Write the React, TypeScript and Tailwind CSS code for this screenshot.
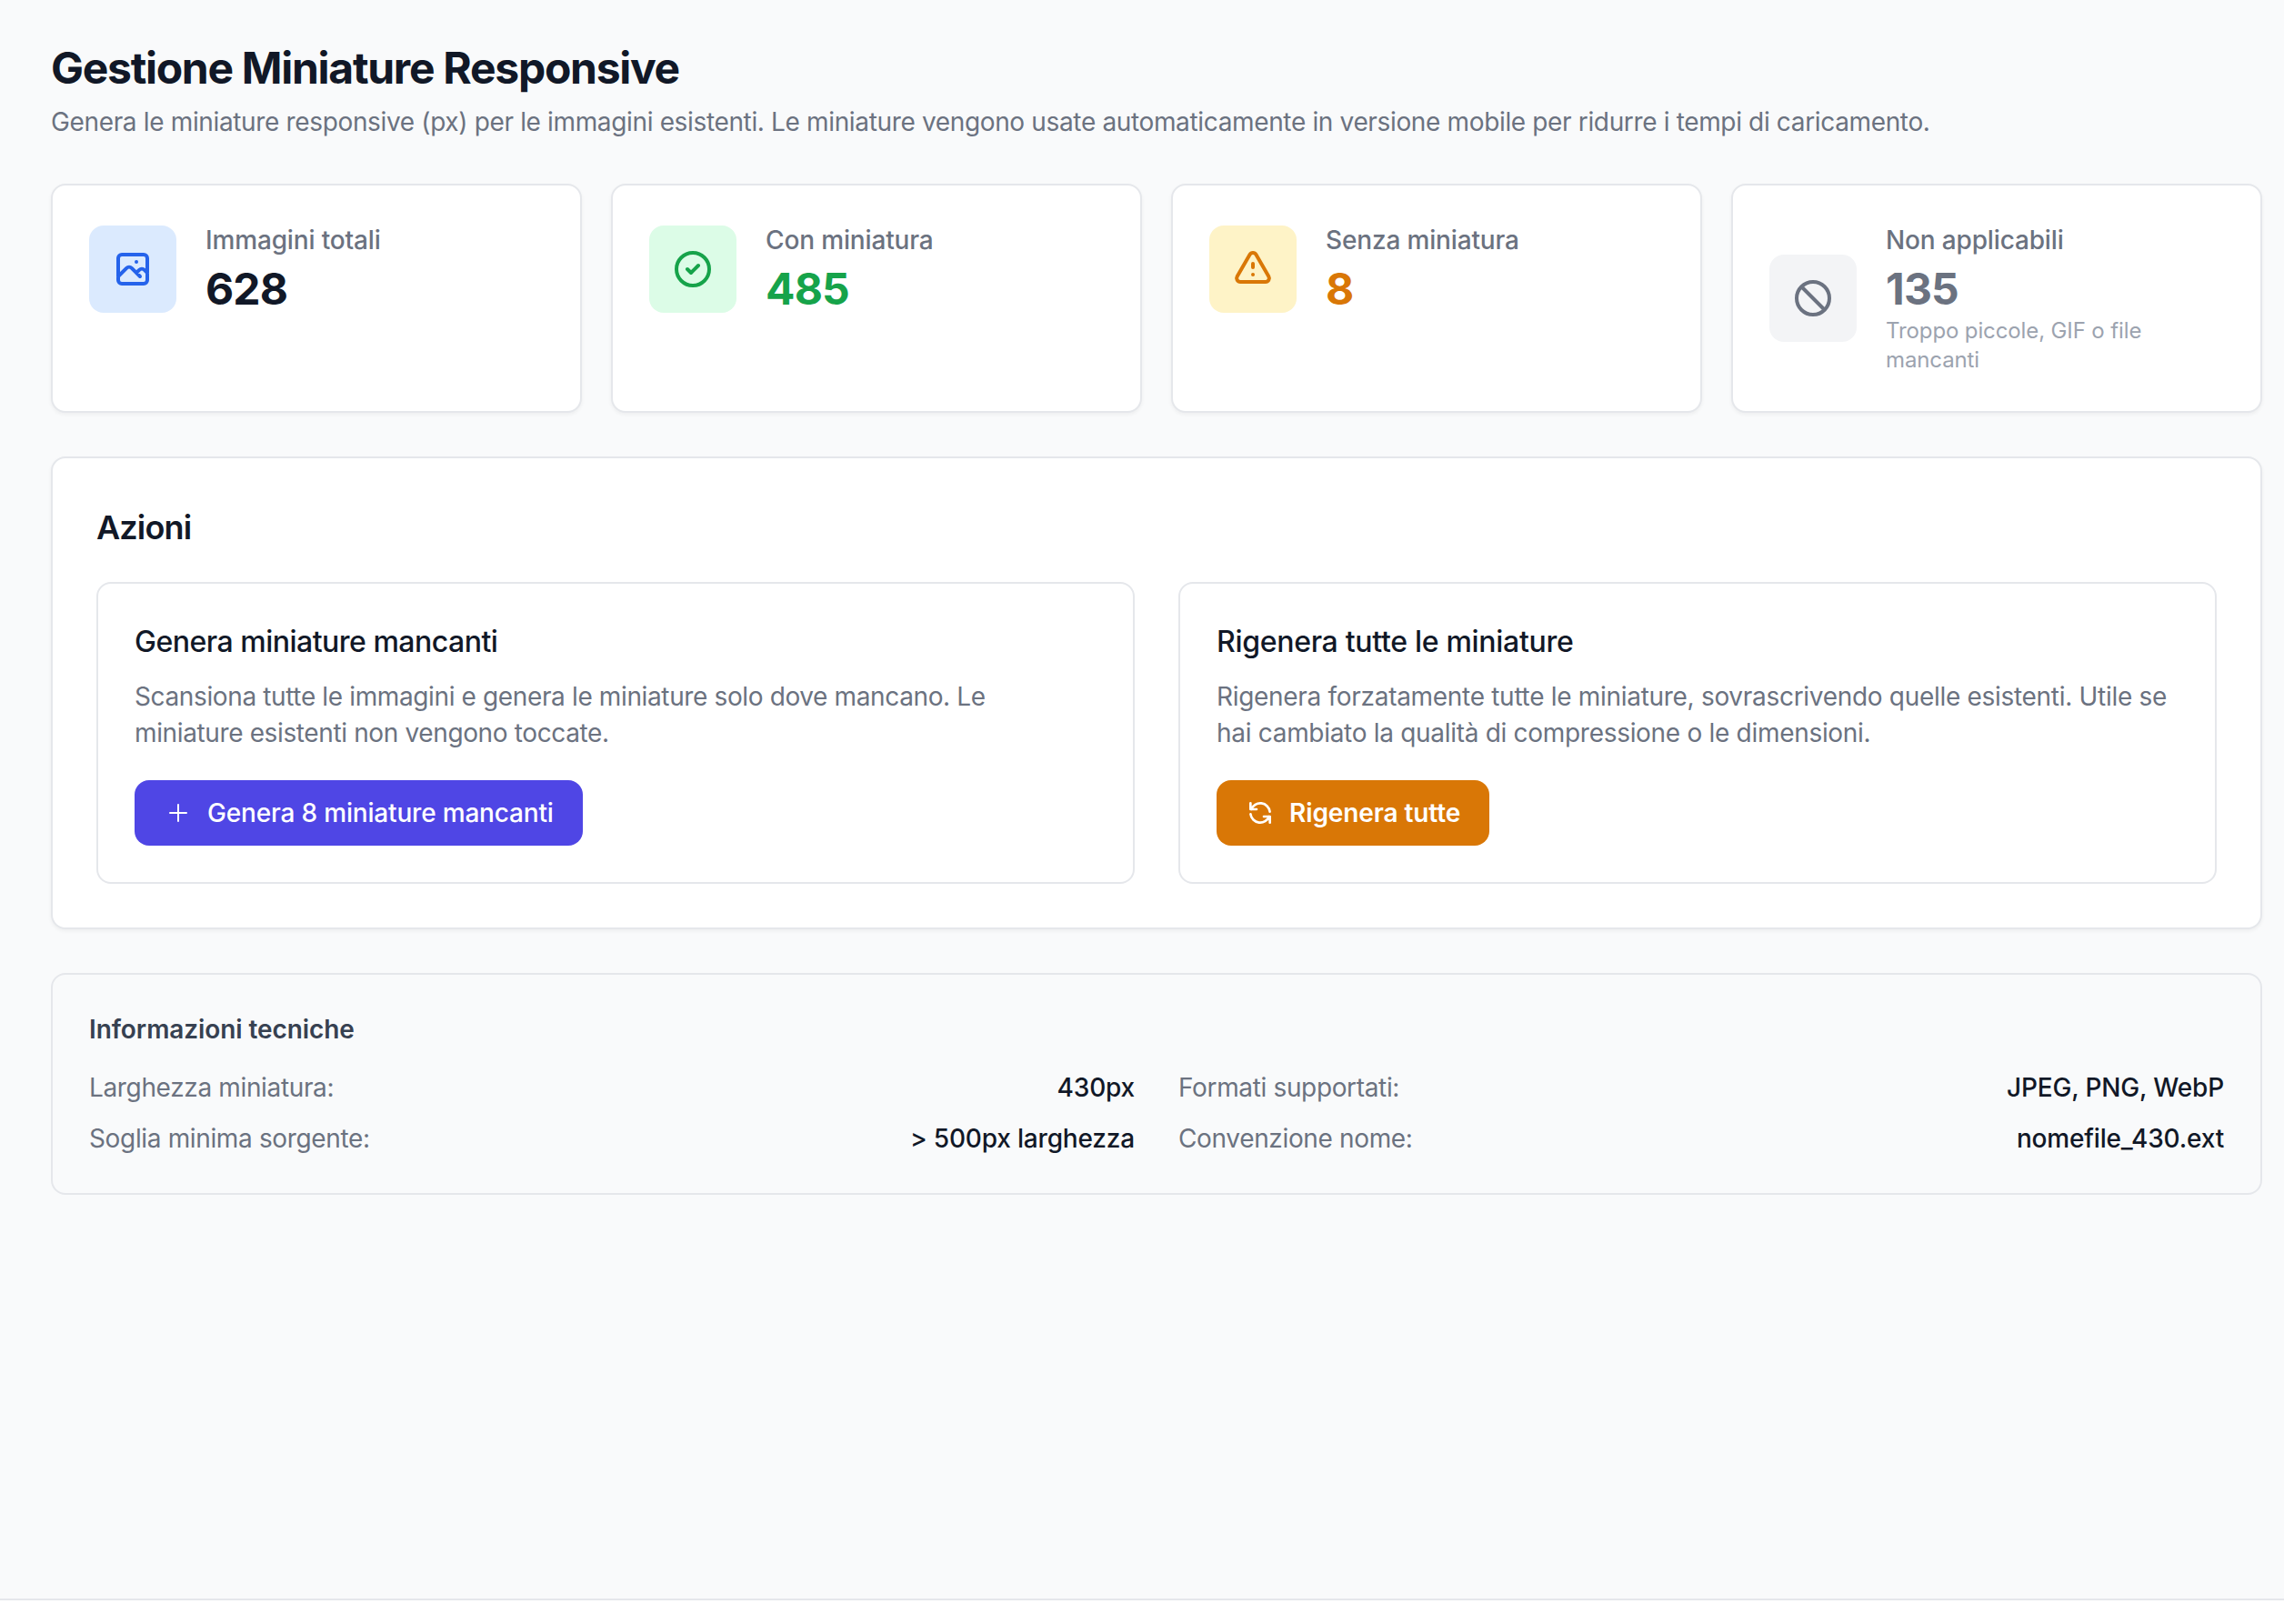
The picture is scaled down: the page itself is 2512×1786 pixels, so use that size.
const sans = "font-['Inter','Noto_Sans',sans-serif]";

type StatProps = {
  label: string;
  value: string;
  box: string;
  ink: string;
  valueInk: string;
  d: string;
  note?: string;
};

function Icon({ d, className, width = 2 }: { d: string; className: string; width?: number }) {
  return (
    <svg className={className} fill="none" viewBox="0 0 24 24" stroke="currentColor" strokeWidth={width} strokeLinecap="round" strokeLinejoin="round">
      <path d={d} />
    </svg>
  );
}

function Stat({ label, value, box, ink, valueInk, d, note }: StatProps) {
  return (
    <div className="bg-white border-2 border-[#e5e7eb] rounded-[16px] shadow-[0_2px_4px_rgba(0,0,0,0.05)] p-10">
      <div className="flex items-center gap-8">
        <div className={`w-24 h-24 shrink-0 rounded-[16px] flex items-center justify-center ${box} ${ink}`}>
          <Icon d={d} className="w-12 h-12" />
        </div>
        <div className="min-w-0">
          <p className="text-[28px] leading-[40px] font-medium tracking-[-0.15px] text-[#6b7280]">{label}</p>
          <p className={`text-[48px] leading-[64px] font-bold tracking-[-0.8px] translate-y-[1.5px] ${valueInk}`}>{value}</p>
          {note && <p className="text-[24px] leading-[32px] tracking-[-0.12px] text-[#9ca3af]">{note}</p>}
        </div>
      </div>
    </div>
  );
}

function Action({ title, titleTrack, text, textTrack, button, d, color, iconWidth }: { title: string; titleTrack: string; text: string; textTrack: string; button: string; d: string; color: string; iconWidth: number }) {
  return (
    <div className="border-2 border-[#e5e7eb] rounded-[16px] p-10">
      <h3 className={`text-[32px] leading-[48px] font-medium text-[#111827] mb-4 ${titleTrack}`}>{title}</h3>
      <p className={`text-[28px] leading-[40px] text-[#6b7280] mb-8 ${textTrack}`}>{text}</p>
      <button className={`inline-flex items-center h-[72px] px-8 rounded-[16px] text-white text-[28px] leading-[40px] ${color}`}>
        <Icon d={d} width={iconWidth} className="w-8 h-8 mr-4" />
        {button}
      </button>
    </div>
  );
}

function Row({ label, value }: { label: string; value: string }) {
  return (
    <div className="flex justify-between text-[28px] leading-[40px]">
      <span className="text-[#6b7280] tracking-[-0.35px]">{label}</span>
      <span className="font-medium text-[#111827] tracking-[-0.18px]">{value}</span>
    </div>
  );
}

export default function App() {
  return (
    <div className={`${sans} bg-white min-h-[1786px]`}>
      <main className="bg-[#f9fafb] border-b-2 border-[#e5e7eb] h-[1760px] pl-14 pr-6 pt-[45px]">
        <h1 className="text-[48px] leading-[60px] font-bold text-[#111827] tracking-[-1.28px]">Gestione Miniature Responsive</h1>
        <p className="text-[28px] leading-[40px] tracking-[-0.35px] text-[#6b7280] mt-[9px] mb-12">
          Genera le miniature responsive (px) per le immagini esistenti. Le miniature vengono usate automaticamente in versione mobile per ridurre i tempi di caricamento.
        </p>

        <div className="grid grid-cols-4 gap-8 mb-12">
          <Stat label="Immagini totali" value="628" box="bg-[#dbeafe]" ink="text-[#2563eb]" valueInk="text-[#111827]"
            d="M4 16l4.586-4.586a2 2 0 012.828 0L16 16m-2-2l1.586-1.586a2 2 0 012.828 0L20 14m-6-6h.01M6 20h12a2 2 0 002-2V6a2 2 0 00-2-2H6a2 2 0 00-2 2v12a2 2 0 002 2z" />
          <Stat label="Con miniatura" value="485" box="bg-[#dcfce7]" ink="text-[#16a34a]" valueInk="text-[#16a34a]"
            d="M9 12l2 2 4-4m6 2a9 9 0 11-18 0 9 9 0 0118 0z" />
          <Stat label="Senza miniatura" value="8" box="bg-[#fef3c7]" ink="text-[#d97706]" valueInk="text-[#d97706]"
            d="M12 9v2m0 4h.01m-6.938 4h13.856c1.54 0 2.502-1.667 1.732-3L13.732 4c-.77-1.333-2.694-1.333-3.464 0L3.34 16c-.77 1.333.192 3 1.732 3z" />
          <Stat label="Non applicabili" value="135" box="bg-[#f3f4f6]" ink="text-[#6b7280]" valueInk="text-[#6b7280]" note="Troppo piccole, GIF o file mancanti"
            d="M18.364 18.364A9 9 0 005.636 5.636m12.728 12.728A9 9 0 015.636 5.636m12.728 12.728L5.636 5.636" />
        </div>

        <section className="bg-white border-2 border-[#e5e7eb] rounded-[16px] shadow-[0_2px_4px_rgba(0,0,0,0.05)] p-12 mb-12">
          <h2 className="text-[36px] leading-[56px] font-semibold tracking-[-0.85px] text-[#111827] mb-8">Azioni</h2>
          <div className="grid grid-cols-2 gap-12">
            <Action title="Genera miniature mancanti" titleTrack="tracking-[-0.5px]" textTrack="tracking-[-0.37px]" text="Scansiona tutte le immagini e genera le miniature solo dove mancano. Le miniature esistenti non vengono toccate."
              button="Genera 8 miniature mancanti" color="bg-[#4f46e5] font-medium tracking-[-0.18px]" iconWidth={1.5} d="M12 5.25v13.5m6.75-6.75H5.25" />
            <Action title="Rigenera tutte le miniature" titleTrack="tracking-[-0.3px]" textTrack="tracking-[-0.3px]" text="Rigenera forzatamente tutte le miniature, sovrascrivendo quelle esistenti. Utile se hai cambiato la qualità di compressione o le dimensioni."
              button="Rigenera tutte" color="bg-[#d97706] font-semibold tracking-[-0.1px]" iconWidth={2} d="M4 4v5h.582m15.356 2A8.001 8.001 0 004.582 9m0 0H9m11 11v-5h-.581m0 0a8.003 8.003 0 01-15.357-2m15.357 2H15" />
          </div>
        </section>

        <section className="border-2 border-[#e5e7eb] rounded-[16px] p-10">
          <h4 className="text-[28px] leading-[40px] font-semibold tracking-[-0.08px] text-[#374151] mb-6">Informazioni tecniche</h4>
          <div className="grid grid-cols-2 gap-x-12 gap-y-4">
            <Row label="Larghezza miniatura:" value="430px" />
            <Row label="Formati supportati:" value="JPEG, PNG, WebP" />
            <Row label="Soglia minima sorgente:" value="> 500px larghezza" />
            <Row label="Convenzione nome:" value="nomefile_430.ext" />
          </div>
        </section>
      </main>
    </div>
  );
}
